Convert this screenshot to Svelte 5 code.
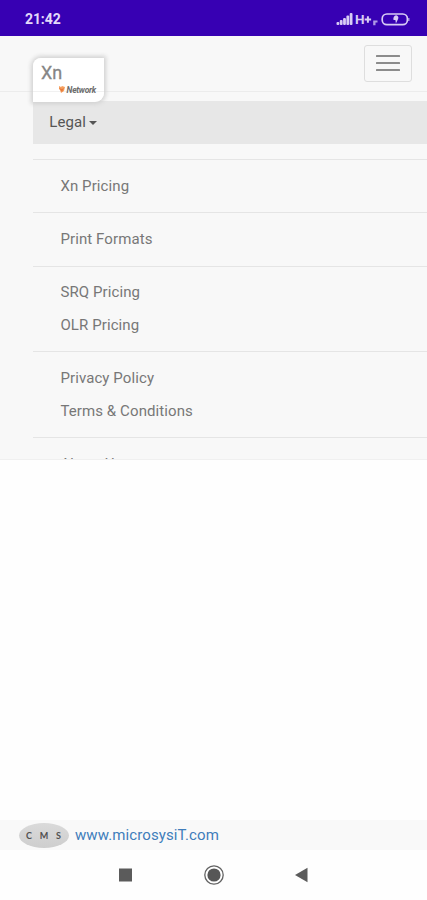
<script>
  const groups = [
    ['Xn Pricing'],
    ['Print Formats'],
    ['SRQ Pricing', 'OLR Pricing'],
    ['Privacy Policy', 'Terms & Conditions'],
    ['About Us']
  ];
</script>

<div class="screen">
  <div class="status">
    <span class="time">21:42</span>
    <svg class="signals" width="76" height="18" viewBox="0 0 76 18">
      <g fill="#d8ccf5">
        <rect x="0.5" y="12" width="2.8" height="3" rx="1" />
        <rect x="3.8" y="10" width="2.8" height="5" rx="1" />
        <rect x="7.1" y="8" width="2.8" height="7" rx="1" />
        <rect x="10.4" y="5.5" width="2.8" height="9.5" rx="1" />
        <rect x="13.7" y="3" width="2.8" height="12" rx="1" />
        <text x="19" y="14" font-size="13.5" font-weight="700">H</text>
        <path d="M28.7 8.4h2.2v-2.2h2v2.2h2.2v2.2h-2.2v2.2h-2v-2.2h-2.2z" />
        <path d="M37.2 10.4h4.3v2.2h-2v2.6h-2.3z" opacity=".75" />
        <path d="M60.1 5.2c2 .4 2.8 2.1 2 3.8l-2.2 4.4-.5-3.4h-1.9c-.5-2.4.5-4.4 2.6-4.8z" />
      </g>
      <rect x="46.2" y="4" width="25.2" height="10.7" rx="4.7" fill="none" stroke="#d8ccf5" stroke-width="1.7" />
      <path d="M72.8 8v3" stroke="#b6a2e6" stroke-width="1.3" />
    </svg>
  </div>

  <nav>
    <header>
      <div class="logo">
        <span class="xn">Xn</span>
        <span class="network">
          <svg width="8" height="9" viewBox="0 0 8 9">
            <path d="M1 1l2 1 1-1 3 1-1 4-3 2-1-3-1-1z" fill="#f6a160" />
            <path d="M1 3l3 1 2-1-2 4z" fill="#e9793a" />
          </svg>
          <i>Network</i>
        </span>
      </div>
      <button aria-label="Menu"><span></span><span></span><span></span></button>
    </header>
    <div class="dropdown">
      <div class="legal">Legal<span class="caret"></span></div>
      <ul>
        {#each groups as group}
          <li class="divider"></li>
          {#each group as item}
            <li class="item">{item}</li>
          {/each}
        {/each}
      </ul>
    </div>
  </nav>

  <main></main>

  <footer>
    <span class="cms"><b>C</b><b>M</b><b>S</b></span>
    <span class="site">www.microsysiT.com</span>
  </footer>

  <div class="system">
    <svg width="427" height="50" viewBox="0 0 427 50">
      <rect x="119" y="18.5" width="13" height="13" fill="#5b5b5b" />
      <circle cx="214" cy="25" r="9.2" fill="#fff" stroke="#636363" stroke-width="1.3" />
      <circle cx="214" cy="25" r="6.6" fill="#565656" />
      <path d="M295 25l12.5-7.2v14.4z" fill="#5b5b5b" />
    </svg>
  </div>
</div>

<style>
  :global(body) {
    margin: 0;
    background: #fff;
  }
  .screen {
    width: 427px;
    height: 900px;
    display: flex;
    flex-direction: column;
    overflow: hidden;
    background: #fefefe;
    font-family: Roboto, "Noto Sans", sans-serif;
    color: #777;
  }
  .status {
    height: 35.5px;
    flex: none;
    box-sizing: border-box;
    display: flex;
    align-items: center;
    justify-content: space-between;
    padding: 3px 15px 0 25px;
    background: #3700b3;
    color: #e3dafa;
  }
  .time {
    font-size: 14px;
    font-weight: 700;
    letter-spacing: -0.1px;
  }
  nav {
    height: 424.5px;
    flex: none;
    box-sizing: border-box;
    overflow: hidden;
    background: #f8f8f8;
    border-bottom: 1px solid #f0f0f0;
  }
  header {
    height: 56px;
    box-sizing: border-box;
    display: flex;
    align-items: flex-start;
    justify-content: space-between;
    padding: 9px 15px 0 33px;
    border-bottom: 1px solid #ececec;
  }
  .logo {
    width: 71px;
    height: 44px;
    margin-top: 13px;
    flex: none;
    box-sizing: border-box;
    display: flex;
    flex-direction: column;
    padding: 4px 8px 0 8px;
    background: linear-gradient(#fff 33px, #f1f1f1 33px, #f1f1f1 34px, #fff 34px);
    border-radius: 8px 0 9px 0;
    box-shadow: 0 0 4px 2px #d2d2d2;
  }
  .xn {
    font-size: 18px;
    line-height: 21px;
    color: #858585;
    -webkit-text-stroke: 0.3px #858585;
  }
  .network {
    display: flex;
    align-items: center;
    align-self: flex-end;
    gap: 1px;
    height: 14px;
    font-size: 8.5px;
    font-weight: 700;
    letter-spacing: -0.25px;
    color: #6c6c6c;
  }
  button {
    width: 48px;
    height: 37px;
    box-sizing: border-box;
    display: flex;
    flex-direction: column;
    align-items: center;
    justify-content: center;
    gap: 4.7px;
    padding: 0;
    border: 1px solid #dedede;
    border-radius: 3px;
    background: #f8f8f8;
  }
  button span {
    width: 24px;
    height: 2px;
    border-radius: 0.5px;
    background: #8c8c8c;
  }
  .dropdown {
    padding: 9px 0 0 33px;
  }
  .legal {
    height: 43px;
    box-sizing: border-box;
    display: flex;
    align-items: center;
    padding-left: 16.3px;
    background: #e7e7e7;
    color: #555;
    font-size: 15px;
    letter-spacing: 0.1px;
  }
  .caret {
    margin: 1px 0 0 2.5px;
    border-top: 4.5px solid #555;
    border-left: 4.5px solid transparent;
    border-right: 4.5px solid transparent;
  }
  ul {
    list-style: none;
    margin: 0;
    padding: 5.5px 0 0;
  }
  .divider {
    height: 1px;
    margin: 10px 0 9.8px;
    background: #e5e5e5;
  }
  .item {
    height: 32.5px;
    line-height: 32.5px;
    padding-left: 27.4px;
    font-size: 15px;
    letter-spacing: 0.1px;
    white-space: nowrap;
  }
  main {
    flex: 1;
  }
  footer {
    height: 30px;
    flex: none;
    display: flex;
    align-items: center;
    gap: 6px;
    padding-left: 19px;
    background: #f9f9f9;
  }
  .cms {
    width: 50px;
    height: 25px;
    box-sizing: border-box;
    border-radius: 50%;
    display: flex;
    align-items: center;
    justify-content: space-between;
    padding: 0 8px 0 7px;
    background: linear-gradient(#dadada, #cecece);
    color: #505050;
    font-family: Lato, sans-serif;
    font-size: 9px;
  }
  .site {
    color: #407dbb;
    font-size: 15px;
    letter-spacing: 0.1px;
  }
  .system {
    height: 50px;
    flex: none;
  }
  .system svg {
    display: block;
  }
</style>
